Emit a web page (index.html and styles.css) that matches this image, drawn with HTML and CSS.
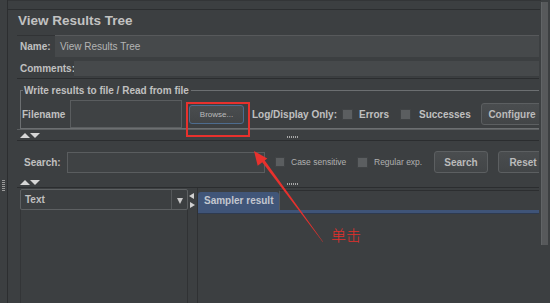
FILE: index.html
```html
<!DOCTYPE html>
<html lang="zh">
<head>
    <meta charset="UTF-8">
    <title>View Results Tree</title>
    <link rel="stylesheet" href="styles.css">
</head>
<body>
    <div class="window">
        <div class="side"><div class="grip"></div></div>
        <div class="main">
            <div class="topbar"></div>
            <div class="panel">
                <div class="vrt-title">View Results Tree</div>
                <div class="vrt-row vrt-name">
                    <label class="vrt-label">Name:</label>
                    <div class="vrt-field">View Results Tree</div>
                </div>
                <div class="vrt-row vrt-comments">
                    <label class="vrt-label">Comments:</label>
                    <div class="vrt-field"></div>
                </div>
                <fieldset class="vrt-file">
                    <legend>Write results to file / Read from file</legend>
                    <div class="file-row">
                        <label class="vrt-label file-label">Filename</label>
                        <div class="vrt-input file-input"></div>
                        <button class="vrt-btn browse-btn">Browse...</button>
                        <span class="vrt-label log-label">Log/Display Only:</span>
                        <span class="vrt-check"></span>
                        <span class="vrt-label chk-text errors-text">Errors</span>
                        <span class="vrt-check"></span>
                        <span class="vrt-label chk-text succ-text">Successes</span>
                        <button class="vrt-btn big-btn configure-btn">Configure</button>
                    </div>
                </fieldset>
                <div class="splitter split-top">
                    <span class="tri-up"></span><span class="tri-down"></span>
                    <span class="dots"></span>
                </div>
                <div class="search-panel">
                    <label class="vrt-label search-label">Search:</label>
                    <div class="vrt-input search-input"></div>
                    <span class="vrt-check small-check"></span>
                    <span class="small-text case-text">Case sensitive</span>
                    <span class="vrt-check"></span>
                    <span class="small-text regex-text">Regular exp.</span>
                    <button class="vrt-btn big-btn search-btn">Search</button>
                    <button class="vrt-btn big-btn reset-btn">Reset</button>
                </div>
                <div class="splitter split-bottom">
                    <span class="tri-up"></span><span class="tri-down"></span>
                    <span class="dots"></span>
                </div>
                <div class="results">
                    <div class="tree-col">
                        <div class="combo">
                            <span class="combo-text">Text</span>
                            <span class="combo-arrow"><span class="arrow-down"></span></span>
                        </div>
                        <div class="tree-list"></div>
                    </div>
                    <div class="h-split">
                        <span class="tri-left"></span>
                        <span class="tri-right"></span>
                    </div>
                    <div class="result-pane">
                        <div class="tabs">
                            <div class="tab active">Sampler result</div>
                            <div class="tab-fill"></div>
                        </div>
                        <div class="tab-band"></div>
                    </div>
                </div>
            </div>
        </div>
        <div class="scrollbar"></div>
    </div>

    <svg class="marks" width="550" height="303" viewBox="0 0 550 303">
        <rect x="187" y="103" width="62" height="33" fill="none" stroke="#e8312d" stroke-width="2"/>
        <polygon points="323.4,242.3 322.6,241.7 261.3,160.9 263.7,159.1" fill="#e8312d"/>
        <polygon points="254,151 267.3,158.6 257.7,165.8" fill="#e8312d"/>
    </svg>
    <div class="note">单击</div>
</body>
</html>
```
FILE: styles.css
```css
* {
    box-sizing: border-box;
}
body {
    margin: 0;
    width: 550px;
    height: 303px;
    overflow: hidden;
    position: relative;
    background: #3c3f41;
    color: #bbbbbb;
    font-family: 'Liberation Sans', Arial, sans-serif;
}
.window {
    display: flex;
    height: 303px;
}
.side {
    width: 8px;
    border-right: 1px solid #2c2e30;
    padding: 180px 0 0 2px;
}
.grip {
    width: 3px;
    height: 11px;
    background: repeating-linear-gradient(to bottom, #9a9a9a 0, #9a9a9a 1px, transparent 1px, transparent 2px);
}
.main {
    width: 533px;
    display: flex;
    flex-direction: column;
    border-top: 1px solid #333537;
}
.topbar {
    height: 9px;
    border-bottom: 1px solid #2c2e30;
    margin-right: 1px;
}
.panel {
    margin-left: 9px;
    width: 522px;
    flex: 1;
    display: flex;
    flex-direction: column;
    overflow: hidden;
}
.scrollbar {
    width: 7px;
    height: 243px;
    margin-top: 2px;
    background: #57595b;
    border-left: 1px solid #616466;
}

.vrt-title {
    height: 25px;
    line-height: 21px;
    padding-left: 1px;
    font-size: 13.5px;
    font-weight: bold;
    color: #c2c2c2;
}
.vrt-label {
    font-size: 10px;
    font-weight: bold;
    color: #c0c0c0;
    white-space: nowrap;
    flex-shrink: 0;
}
.vrt-row {
    display: flex;
}
.vrt-row .vrt-label {
    padding-left: 3px;
}
.vrt-name {
    height: 22px;
    align-items: center;
    border-top: 1px solid #313335;
}
.vrt-name .vrt-label {
    width: 38px;
}
.vrt-name .vrt-field {
    height: 22px;
    line-height: 21px;
    margin-top: -1px;
    padding-left: 5px;
    font-size: 10px;
}
.vrt-field {
    flex: 1;
    background: #46494b;
    border-top: 1px solid #57595b;
    color: #b4b4b4;
}
.vrt-comments {
    height: 22px;
    padding-top: 4px;
    border-bottom: 1px solid #2b2d2f;
}
.vrt-comments .vrt-label {
    width: 57px;
    line-height: 16px;
}
.vrt-comments .vrt-field {
    height: 16px;
    border-top: none;
    border-bottom: 1px solid #3a3d3f;
}

.vrt-file {
    margin: 5px 0 0 3px;
    width: 525px;
    padding: 0 0 0 1px;
    border: 1px solid #6c6f71;
    border-right: none;
    min-width: 0;
}
.vrt-file legend {
    margin-left: 1px;
    padding: 0 2px 0 1px;
    font-size: 10px;
    font-weight: bold;
    line-height: 13px;
    color: #c0c0c0;
}
.file-row {
    display: flex;
    align-items: center;
    height: 28px;
    margin-top: 3px;
}
.file-label {
    width: 48px;
}
.vrt-input {
    background: #3f4244;
    border: 1px solid #5a5d5f;
    flex-shrink: 0;
}
.file-input {
    width: 112px;
    height: 28px;
}
.vrt-btn {
    flex-shrink: 0;
    font-family: 'Liberation Sans', Arial, sans-serif;
    color: #bbbbbb;
    background: linear-gradient(#4a4d4f, #424547);
    border: 1px solid #5c5f61;
    border-radius: 3px;
    padding: 0;
}
.browse-btn {
    margin-left: 7px;
    width: 55px;
    height: 19px;
    font-size: 8px;
    border-color: #4d6c8f;
}
.log-label {
    margin-left: 8px;
    width: 90px;
}
.vrt-check {
    width: 11px;
    height: 11px;
    flex-shrink: 0;
    background: #5b5e60;
    border: 1px solid #404345;
}
.chk-text {
    margin-left: 6px;
}
.errors-text {
    width: 41px;
}
.succ-text {
    margin-left: 8px;
    width: 62px;
}
.big-btn {
    height: 22px;
    font-size: 10px;
    font-weight: bold;
}
.configure-btn {
    width: 62px;
}

.splitter {
    display: flex;
    align-items: flex-end;
    padding-left: 3px;
    border-bottom: 1px solid #2b2d2f;
}
.split-top {
    height: 12px;
    padding-bottom: 2px;
    border-top: 1px solid #5c5f61;
}
.split-bottom {
    height: 10px;
    padding-bottom: 2px;
}
.tri-up, .tri-down {
    width: 0;
    height: 0;
    border-left: 5px solid transparent;
    border-right: 5px solid transparent;
}
.tri-up {
    border-bottom: 5px solid #d6d6d6;
}
.tri-down {
    border-top: 5px solid #d6d6d6;
}
.dots {
    margin-left: 247px;
    width: 11px;
    height: 2px;
    background: repeating-linear-gradient(to right, #a8a8a8 0, #a8a8a8 1px, transparent 1px, transparent 2px);
}

.search-panel {
    display: flex;
    align-items: center;
    height: 37px;
    padding: 10px 0 5px 7px;
}
.search-label {
    width: 43px;
}
.search-input {
    width: 198px;
    height: 21px;
}
.small-check {
    margin-left: 10px;
    width: 10px;
    height: 10px;
}
.small-text {
    font-size: 8.5px;
    color: #b0b0b0;
    flex-shrink: 0;
    white-space: nowrap;
}
.case-text {
    margin-left: 6px;
    width: 66px;
}
.regex-text {
    margin-left: 6px;
    width: 60px;
}
.search-btn {
    width: 54px;
}
.reset-btn {
    margin-left: 10px;
    width: 50px;
}

.results {
    flex: 1;
    display: flex;
}
.tree-col {
    margin-left: 3px;
    width: 168px;
    display: flex;
    flex-direction: column;
}
.combo {
    display: flex;
    margin-top: 1px;
    height: 21px;
    border: 1px solid #5d6062;
    border-radius: 2px;
}
.combo-text {
    flex: 1;
    padding-left: 4px;
    line-height: 19px;
    font-size: 10px;
    font-weight: bold;
    color: #c0c0c0;
}
.combo-arrow {
    width: 16px;
    border-left: 1px solid #55585a;
    display: flex;
    align-items: center;
    justify-content: center;
}
.arrow-down {
    width: 0;
    height: 0;
    border-left: 3px solid transparent;
    border-right: 3px solid transparent;
    border-top: 6px solid #c8c8c8;
    margin-top: 2px;
}
.tree-list {
    flex: 1;
    border-left: 1px solid #333537;
    border-right: 1px solid #303234;
}
.h-split {
    width: 9px;
    display: flex;
    flex-direction: column;
    padding: 5px 0 0 1px;
    gap: 3px;
}
.tri-left, .tri-right {
    width: 0;
    height: 0;
    border-top: 3.5px solid transparent;
    border-bottom: 3.5px solid transparent;
}
.tri-left {
    border-right: 5px solid #d0d0d0;
}
.tri-right {
    margin-left: 1px;
    border-left: 5px solid #d0d0d0;
}
.result-pane {
    flex: 1;
    border-left: 1px solid #2f3133;
}
.tabs {
    display: flex;
    height: 22px;
}
.tab {
    margin-top: 4px;
    width: 81px;
    height: 18px;
    padding-left: 6px;
    line-height: 17px;
    font-size: 10px;
    font-weight: bold;
    color: #c3c7cf;
    white-space: nowrap;
    background: #415679;
    border-radius: 3px 3px 0 0;
}
.tab-fill {
    flex: 1;
    margin-top: 2px;
    border-top: 1px solid #2c2e30;
    border-left: 1px solid #56595b;
}
.tab-band {
    height: 4px;
    border-top: 3px solid #3f5478;
    border-bottom: 1px solid #2e3a4f;
}

.marks {
    position: absolute;
    top: 0;
    left: 0;
    pointer-events: none;
}
.note {
    position: absolute;
    left: 331px;
    top: 226px;
    font-size: 15px;
    line-height: 18px;
    color: #e0302c;
    font-family: 'Noto Sans CJK SC', sans-serif;
    font-weight: 300;
}
```
